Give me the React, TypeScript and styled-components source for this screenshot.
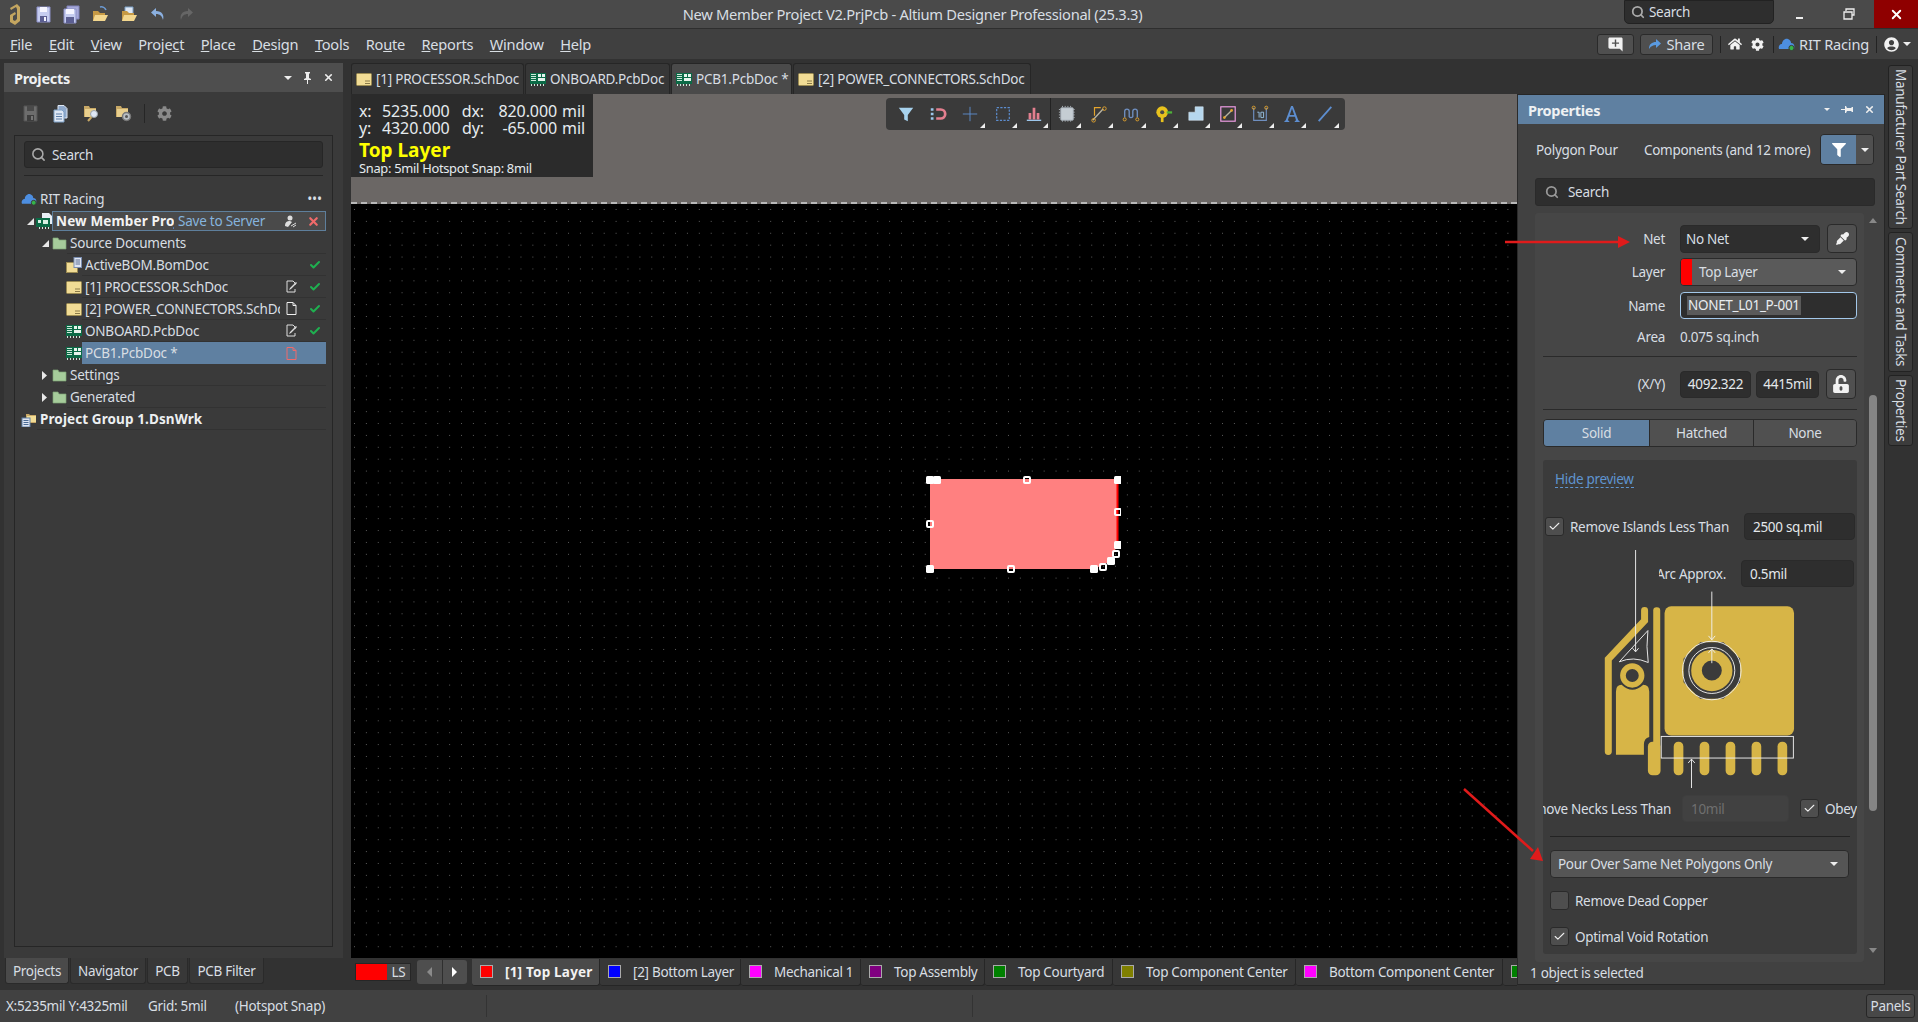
import styled, { createGlobalStyle } from "styled-components";
import { Check, Search, X } from "lucide-react";
import { FaCog, FaEyeDropper, FaFilter, FaHome, FaUnlockAlt, FaUserCircle } from "react-icons/fa";
import { MdAddComment } from "react-icons/md";

const FONT = `"Noto Sans", "Open Sans", sans-serif`;
const TEXT = "#d8dee3";

const Global = createGlobalStyle`
  html, body { margin: 0; padding: 0; background: #323232; overflow: hidden; }
  * { box-sizing: border-box; }
`;

const Page = styled.div`
  width: 1918px;
  height: 1022px;
  display: flex;
  flex-direction: column;
  position: relative;
  overflow: hidden;
  background: #323232;
  color: ${TEXT};
  font-family: ${FONT};
  font-size: 13.5px;
  letter-spacing: -0.3px;
`;

/* ---------- title bar ---------- */
const TitleBar = styled.div`
  height: 29px;
  flex: none;
  display: flex;
  align-items: center;
  position: relative;
  background: #4a4a4a;
  border-bottom: 1px solid #2e2e2e;
`;
const QuickIcons = styled.div`
  display: flex;
  align-items: center;
  gap: 12px;
  padding-left: 8px;
`;
const LogoSlot = styled.span`
  display: flex;
  margin-right: 3px;
`;
const WindowTitle = styled.div`
  flex: 1;
  padding-left: 7px;
  text-align: center;
  font-size: 14.7px;
  letter-spacing: -0.3px;
  white-space: nowrap;
`;
const TitleSearch = styled.div`
  width: 150px;
  height: 24px;
  margin-top: -4px;
  display: flex;
  align-items: center;
  gap: 4px;
  padding-left: 6px;
  background: #2e2e2e;
  border: 1px solid #222;
  border-radius: 0 0 5px 5px;
  font-size: 13.5px;
`;
const WinButton = styled.div<{ $close?: boolean }>`
  width: ${(p) => (p.$close ? "44px" : "50px")};
  height: 28px;
  display: flex;
  align-items: center;
  justify-content: center;
  background: ${(p) => (p.$close ? "#8f0000" : "transparent")};
`;

/* ---------- menu bar ---------- */
const MenuBar = styled.div`
  height: 30px;
  flex: none;
  display: flex;
  align-items: center;
  padding-left: 10px;
  background: #404040;
  font-size: 14.6px;
  letter-spacing: -0.25px;
`;
const MenuItem = styled.span<{ $gap: number }>`
  margin-right: ${(p) => p.$gap}px;
`;
const MenuRight = styled.div`
  margin-left: auto;
  display: flex;
  align-items: center;
  padding-right: 7px;
`;
const HeadButton = styled.div<{ $w: number }>`
  width: ${(p) => p.$w}px;
  height: 21px;
  margin-right: 6px;
  display: flex;
  align-items: center;
  justify-content: center;
  gap: 6px;
  background: #4f4f4f;
  border: 1px solid #2a2a2a;
  border-radius: 3px;
`;
const HeadSep = styled.div<{ $after?: number }>`
  width: 1px;
  height: 17px;
  margin: 0 ${(p) => p.$after ?? 7}px 0 1px;
  background: #232323;
`;
const HeadIcon = styled.span<{ $mr: number }>`
  display: flex;
  margin-right: ${(p) => p.$mr}px;
`;
const HeadName = styled.span`
  margin: 0 6px 0 4px;
  letter-spacing: -0.2px;
  white-space: nowrap;
`;

/* ---------- main area ---------- */
const Main = styled.div`
  flex: 1;
  min-height: 0;
  display: flex;
`;

/* left */
const LeftColumn = styled.div`
  width: 351px;
  flex: none;
  padding: 4px 8px 0 4px;
  display: flex;
  flex-direction: column;
`;
const ProjectsPanel = styled.div`
  height: 895px;
  display: flex;
  flex-direction: column;
  background: #3a3a3a;
`;
const PanelHead = styled.div<{ $active?: boolean }>`
  height: 29px;
  flex: none;
  display: flex;
  align-items: center;
  padding: 0 9px 0 10px;
  background: ${(p) => (p.$active ? "#5f80a1" : "#4e4e4e")};
  color: #eef1f3;
  font-size: 14.5px;
  font-weight: 700;
`;
const PanelTools = styled.div`
  margin-left: auto;
  display: flex;
  align-items: center;
  gap: 11px;
`;
const Triangle = styled.span<{ $size?: number; $color?: string }>`
  display: inline-block;
  width: 0;
  height: 0;
  border-left: ${(p) => p.$size ?? 4}px solid transparent;
  border-right: ${(p) => p.$size ?? 4}px solid transparent;
  border-top: ${(p) => p.$size ?? 4}px solid ${(p) => p.$color ?? "#eee"};
`;
const ProjectTools = styled.div`
  height: 43px;
  flex: none;
  display: flex;
  align-items: center;
  gap: 15px;
  padding-left: 19px;
`;
const ToolDivider = styled.div`
  width: 1px;
  height: 19px;
  margin: 0 -3px;
  background: #262626;
`;
const TreeBox = styled.div`
  margin: 0 10px;
  height: 812px;
  border: 1px solid #262626;
  padding: 5px 9px 0;
`;
const SearchField = styled.div`
  height: 27px;
  display: flex;
  align-items: center;
  gap: 6px;
  padding-left: 6px;
  background: #2e2e2e;
  border: 1px solid #262626;
  border-radius: 3px;
`;
const TreeDivider = styled.div`
  height: 1px;
  margin-top: 7px;
  background: #262626;
`;
const Tree = styled.div`
  margin: 12px -3px 0 -9px;
  letter-spacing: -0.22px;
`;
const TreeRow = styled.div<{ $indent: number }>`
  height: 22px;
  display: flex;
  align-items: center;
  padding-left: ${(p) => p.$indent}px;
`;
const CaretSlot = styled.span`
  width: 12px;
  flex: none;
  display: flex;
  align-items: center;
  justify-content: center;
`;
const RowGlyph = styled.span`
  width: 16px;
  height: 16px;
  flex: none;
  display: flex;
  align-items: center;
  justify-content: center;
`;
const RowBody = styled.div<{ $selected?: boolean; $framed?: boolean; $line?: boolean }>`
  flex: 1;
  min-width: 0;
  height: ${(p) => (p.$framed ? "20px" : "22px")};
  display: flex;
  align-items: center;
  padding-left: 3px;
  background: ${(p) => (p.$selected ? "#5f80a1" : p.$framed ? "#4a4a4a" : "transparent")};
  border: ${(p) => (p.$framed ? "1px solid #5e7f9c" : "none")};
  border-bottom: ${(p) => (p.$framed ? "1px solid #5e7f9c" : p.$line && !p.$selected ? "1px solid #323232" : "none")};
`;
const RowLabel = styled.span<{ $bold?: boolean }>`
  flex: 1;
  min-width: 0;
  overflow: hidden;
  white-space: nowrap;
  font-weight: ${(p) => (p.$bold ? 700 : 400)};
  letter-spacing: ${(p) => (p.$bold ? "0.1px" : "inherit")};
  color: ${(p) => (p.$bold ? "#eceff1" : TEXT)};
`;
const ProjectName = styled.span`
  width: 118px;
  flex: none;
  overflow: hidden;
  white-space: nowrap;
  font-weight: 700;
  letter-spacing: 0.15px;
  color: #f2f2f2;
`;
const SaveLink = styled.span`
  flex: 1;
  padding-left: 4px;
  white-space: nowrap;
  color: #86b4de;
`;
const StatusSlot = styled.span`
  width: 23px;
  flex: none;
  display: flex;
  align-items: center;
  justify-content: center;
`;
const BottomTabs = styled.div`
  display: flex;
  gap: 1px;
  margin-left: 1px;
`;
const PanelTab = styled.div<{ $w: number; $active?: boolean }>`
  width: ${(p) => p.$w}px;
  height: 26px;
  display: flex;
  align-items: center;
  justify-content: center;
  background: ${(p) => (p.$active ? "#4a4a4a" : "#383838")};
  border: 1px solid #2a2a2a;
  border-top: none;
  border-radius: 0 0 3px 3px;
`;

/* center */
const Center = styled.div`
  width: 1166px;
  flex: none;
  padding-top: 4px;
  display: flex;
  flex-direction: column;
`;
const DocTabs = styled.div`
  height: 31px;
  flex: none;
  display: flex;
  gap: 1px;
`;
const DocTab = styled.div<{ $w: number; $active?: boolean }>`
  width: ${(p) => p.$w}px;
  display: flex;
  align-items: center;
  gap: 4px;
  padding-left: 4px;
  white-space: nowrap;
  letter-spacing: -0.22px;
  background: ${(p) => (p.$active ? "#4a4a4a" : "#373737")};
  border: 1px solid #262626;
  border-bottom: none;
  border-radius: 3px 3px 0 0;
`;
const Canvas = styled.div`
  height: 864px;
  flex: none;
  position: relative;
  display: flex;
  flex-direction: column;
  overflow: hidden;
`;
const SheetBand = styled.div`
  height: 110px;
  flex: none;
  background: #6b6765;
  border-bottom: 2px dashed #b9b9b9;
`;
const Board = styled.div`
  flex: 1;
  background-color: #000;
  background-image: radial-gradient(circle at 0.5px 0.5px, #5c5c5c 0.7px, transparent 0.8px);
  background-size: 11.9px 11.9px;
  background-position: 3px 5px;
`;
const Hud = styled.div`
  position: absolute;
  left: 0;
  top: 0;
  width: 242px;
  height: 83px;
  padding: 9px 7px 0 8px;
  background: #2b2b2b;
  color: #e6ebef;
`;
const HudLine = styled.div`
  display: grid;
  grid-template-columns: 23px 66px 36px 73px 28px;
  height: 17px;
  line-height: 17px;
  font-size: 16px;
  letter-spacing: -0.1px;
  white-space: nowrap;
`;
const HudValue = styled.span`
  text-align: right;
`;
const HudLayer = styled.div`
  margin-top: 1px;
  height: 25px;
  line-height: 25px;
  font-size: 19px;
  font-weight: 700;
  color: #ffff00;
  letter-spacing: 0;
`;
const HudSnap = styled.div`
  margin-top: -3px;
  font-size: 12.9px;
  line-height: 16px;
  white-space: nowrap;
`;
const FloatBar = styled.div`
  position: absolute;
  left: 535px;
  top: 4px;
  width: 459px;
  height: 32px;
  display: flex;
  align-items: center;
  padding-left: 4px;
  background: #3a3a3a;
  border-radius: 4px;
`;
const FloatSlot = styled.div<{ $nomark?: boolean; $split?: boolean }>`
  width: 32.2px;
  height: 32px;
  flex: none;
  position: relative;
  display: flex;
  align-items: center;
  justify-content: center;
  border-right: ${(p) => (p.$split ? "1px solid #222" : "none")};
  &::after {
    content: "";
    display: ${(p) => (p.$nomark ? "none" : "block")};
    position: absolute;
    right: 2px;
    bottom: 2px;
    border-left: 5px solid transparent;
    border-bottom: 5px solid #eee;
  }
`;
const PolygonArt = styled.svg`
  position: absolute;
  left: 570px;
  top: 377px;
`;
const LayerBar = styled.div`
  height: 28px;
  flex: none;
  display: flex;
  align-items: center;
  padding-left: 4px;
  overflow: hidden;
`;
const LsBox = styled.div`
  width: 56px;
  height: 18px;
  flex: none;
  display: flex;
  border: 1px solid #262626;
`;
const LsColor = styled.div`
  width: 31px;
  background: #ff0000;
`;
const LsText = styled.div`
  flex: 1;
  display: flex;
  align-items: center;
  justify-content: center;
  background: #4a4a4a;
`;
const LayerNav = styled.div`
  width: 50px;
  height: 24px;
  margin: 0 5px 0 6px;
  flex: none;
  display: flex;
  background: #4e4e4e;
  border-radius: 3px;
`;
const NavHalf = styled.div`
  flex: 1;
  display: flex;
  align-items: center;
  justify-content: center;
  & + & { border-left: 1px solid #2f2f2f; }
`;
const NavArrow = styled.span<{ $dir: "l" | "r"; $dim?: boolean }>`
  width: 0;
  height: 0;
  border-top: 5px solid transparent;
  border-bottom: 5px solid transparent;
  ${(p) => (p.$dir === "l" ? "border-right" : "border-left")}: 5px solid ${(p) => (p.$dim ? "#8a8a8a" : "#fff")};
`;
const LayerTab = styled.div<{ $w: number; $active?: boolean }>`
  width: ${(p) => p.$w}px;
  height: 27px;
  flex: none;
  display: flex;
  align-items: center;
  gap: 12px;
  padding-left: 8px;
  white-space: nowrap;
  background: ${(p) => (p.$active ? "#4a4a4a" : "#373737")};
  border-right: 1px solid #262626;
  border-bottom: 1px solid #262626;
  border-radius: 0 0 3px 3px;
  font-weight: ${(p) => (p.$active ? 700 : 400)};
  letter-spacing: ${(p) => (p.$active ? "0.2px" : "inherit")};
  color: ${(p) => (p.$active ? "#f2f2f2" : TEXT)};
`;
const LayerChip = styled.span<{ $color: string }>`
  width: 13px;
  height: 13px;
  flex: none;
  background: ${(p) => p.$color};
  border: 1px solid #aaa;
`;

/* properties */
const PropsPanel = styled.div`
  width: 368px;
  height: 891px;
  margin-top: 35px;
  flex: none;
  display: flex;
  flex-direction: column;
  background: #414141;
  border: 1px solid #262626;
  border-left: 1px solid #2a2a2a;
`;
const PropsTop = styled.div`
  height: 31px;
  margin-top: 10px;
  flex: none;
  display: flex;
  align-items: center;
  padding: 0 10px 0 18px;
`;
const ObjectKind = styled.span`
  width: 108px;
  flex: none;
`;
const FilterText = styled.span`
  flex: 1;
  white-space: nowrap;
`;
const FilterButton = styled.div`
  width: 54px;
  height: 31px;
  flex: none;
  display: flex;
  border: 1px solid #2a2a2a;
  border-radius: 4px;
  overflow: hidden;
`;
const FilterMain = styled.div`
  width: 35px;
  background: #5f80a1;
  display: flex;
  align-items: center;
  justify-content: center;
  color: #fff;
`;
const FilterCaret = styled.div`
  flex: 1;
  background: #505050;
  display: flex;
  align-items: center;
  justify-content: center;
`;
const PropsSearch = styled.div`
  height: 28px;
  margin: 13px 9px 0 17px;
  flex: none;
  display: flex;
  align-items: center;
  gap: 9px;
  padding-left: 9px;
  background: #2e2e2e;
  border: 1px solid #2a2a2a;
  border-radius: 3px;
`;
const PropsScroll = styled.div`
  flex: 1;
  min-height: 0;
  margin: 7px 6px 0 17px;
  display: flex;
`;
const PropsBody = styled.div`
  width: 329px;
  height: 749px;
  flex: none;
  padding: 11px 7px 0 8px;
  background: #464646;
  border-radius: 3px;
`;
const ScrollTrack = styled.div`
  flex: 1;
  display: flex;
  flex-direction: column;
  align-items: center;
  padding-left: 3px;
`;
const ScrollUp = styled.span`
  margin-top: 5px;
  border-left: 4px solid transparent;
  border-right: 4px solid transparent;
  border-bottom: 5px solid #888;
`;
const ScrollThumb = styled.div`
  width: 8px;
  height: 416px;
  margin-top: 172px;
  background: #858585;
  border-radius: 4px;
`;
const ScrollDown = styled.span`
  margin-top: 137px;
  border-left: 4px solid transparent;
  border-right: 4px solid transparent;
  border-top: 5px solid #888;
`;
const FieldRow = styled.div<{ $h: number; $top?: number }>`
  height: ${(p) => p.$h}px;
  margin-top: ${(p) => p.$top ?? 0}px;
  display: grid;
  grid-template-columns: 122px 177px;
  column-gap: 15px;
  align-items: center;
`;
const FieldLabel = styled.span`
  text-align: right;
  white-space: nowrap;
`;
const FieldGroup = styled.div`
  display: flex;
  align-items: center;
  gap: 7px;
`;
const Dropdown = styled.div<{ $light?: boolean }>`
  flex: 1;
  height: 100%;
  min-height: 28px;
  display: flex;
  align-items: center;
  justify-content: space-between;
  padding: 0 10px 0 5px;
  background: ${(p) => (p.$light ? "#5a5a5a" : "#2e2e2e")};
  border: 1px solid #2a2a2a;
  border-radius: 4px;
  overflow: hidden;
`;
const LayerSwatch = styled.span`
  width: 11px;
  align-self: stretch;
  flex: none;
  margin: 0 7px 0 -5px;
  background: #ff0000;
`;
const DropText = styled.span`
  flex: 1;
  white-space: nowrap;
`;
const IconButton = styled.div<{ $h?: number }>`
  width: 30px;
  height: ${(p) => p.$h ?? 29}px;
  flex: none;
  display: flex;
  align-items: center;
  justify-content: center;
  background: #505050;
  border: 1px solid #2a2a2a;
  border-radius: 4px;
  color: #f2f2f2;
`;
const NameInput = styled.div`
  height: 27px;
  display: flex;
  align-items: center;
  padding-left: 6px;
  background: #2e2e2e;
  border: 1px solid #a3c8ea;
  border-radius: 4px;
`;
const Selected = styled.span`
  padding: 0 1px;
  background: #5a5a5a;
  line-height: 19px;
  color: #e8ecef;
  white-space: nowrap;
`;
const Rule = styled.div<{ $top: number; $dark?: boolean; $inset?: number }>`
  height: 1px;
  margin: ${(p) => p.$top}px ${(p) => p.$inset ?? 0}px 0;
  background: ${(p) => (p.$dark ? "#232323" : "#2a2a2a")};
`;
const TextInput = styled.div<{ $w: number; $disabled?: boolean; $center?: boolean }>`
  width: ${(p) => p.$w}px;
  height: 27px;
  flex: none;
  display: flex;
  align-items: center;
  justify-content: ${(p) => (p.$center ? "center" : "flex-start")};
  padding-left: ${(p) => (p.$center ? 0 : 8)}px;
  background: ${(p) => (p.$disabled ? "#414141" : "#2e2e2e")};
  border: 1px solid ${(p) => (p.$disabled ? "#3e3e3e" : "#2a2a2a")};
  border-radius: 4px;
  color: ${(p) => (p.$disabled ? "#6f6f6f" : "#e4e8eb")};
`;
const CoordGroup = styled.div`
  display: flex;
  align-items: center;
  gap: 5px;
`;
const Segments = styled.div`
  height: 28px;
  margin-top: 9px;
  display: grid;
  grid-template-columns: 105px 104px 1fr;
  border: 1px solid #2a2a2a;
  border-radius: 4px;
  overflow: hidden;
`;
const Segment = styled.div<{ $on?: boolean }>`
  display: flex;
  align-items: center;
  justify-content: center;
  background: ${(p) => (p.$on ? "#5f80a1" : "#505050")};
  & + & { border-left: 1px solid #2a2a2a; }
`;
const Preview = styled.div`
  height: 494px;
  margin-top: 13px;
  padding-top: 10px;
  background: #3b3b3b;
  border-radius: 3px;
  overflow: hidden;
`;
const HideLink = styled.span`
  display: inline-block;
  margin-left: 12px;
  line-height: 16px;
  color: #5f94cf;
  border-bottom: 1px dashed #5f94cf;
`;
const PreviewRow = styled.div<{ $top: number; $end?: boolean; $pad?: number }>`
  height: 27px;
  margin-top: ${(p) => p.$top}px;
  display: flex;
  align-items: center;
  justify-content: ${(p) => (p.$end ? "flex-end" : "flex-start")};
  padding: 0 3px 0 ${(p) => p.$pad ?? 0}px;
`;
const Box = styled.div`
  width: 19px;
  height: 19px;
  flex: none;
  display: flex;
  align-items: center;
  justify-content: center;
  background: #4e4e4e;
  border: 1px solid #2a2a2a;
  border-radius: 3px;
  color: #eee;
`;
const BoxLabel = styled.span<{ $w?: number }>`
  margin-left: 6px;
  white-space: nowrap;
  ${(p) => (p.$w ? `width: ${p.$w}px; overflow: hidden; flex: none;` : "")}
`;
const ClipLabel = styled.span<{ $w: number; $gap: number }>`
  width: ${(p) => p.$w}px;
  margin-right: ${(p) => p.$gap}px;
  flex: none;
  display: flex;
  justify-content: flex-end;
  overflow: hidden;
  white-space: nowrap;
`;
const NeckBox = styled.span`
  display: flex;
  margin-left: 11px;
`;
const PreviewArt = styled.svg`
  display: block;
  margin: -37px 0 0 60px;
`;
const PourSelect = styled.div`
  height: 28px;
  margin: 13px 8px 0 7px;
  display: flex;
  align-items: center;
  justify-content: space-between;
  padding: 0 10px 0 7px;
  background: #555;
  border: 1px solid #2a2a2a;
  border-radius: 4px;
  white-space: nowrap;
`;
const CheckRow = styled.div<{ $top: number }>`
  height: 19px;
  margin: ${(p) => p.$top}px 0 0 7px;
  display: flex;
  align-items: center;
`;
const PropsStatus = styled.div`
  height: 22px;
  flex: none;
  padding-left: 12px;
  display: flex;
  align-items: center;
`;

/* right tabs */
const SideTabs = styled.div`
  flex: 1;
  padding: 6px 0 0 3px;
  display: flex;
  flex-direction: column;
  gap: 3px;
`;
const SideTab = styled.div<{ $h: number }>`
  width: 25px;
  height: ${(p) => p.$h}px;
  display: flex;
  align-items: center;
  justify-content: center;
  writing-mode: vertical-rl;
  white-space: nowrap;
  background: #3c3c3c;
  border: 1px solid #222;
  border-radius: 3px;
`;

/* status bar */
const StatusBar = styled.div`
  height: 32px;
  flex: none;
  display: flex;
  align-items: center;
  padding-left: 6px;
  background: #414141;
`;
const StatusText = styled.span<{ $w: number }>`
  width: ${(p) => p.$w}px;
  flex: none;
  white-space: nowrap;
`;
const StatusSep = styled.div<{ $w: number }>`
  width: ${(p) => p.$w}px;
  height: 22px;
  flex: none;
  border-right: 1px solid #333;
`;
const PanelsButton = styled.div`
  width: 49px;
  height: 24px;
  margin: 0 3px 0 auto;
  display: flex;
  align-items: center;
  justify-content: center;
  background: #484848;
  border: 1px solid #262626;
  border-radius: 3px;
`;
const Annotations = styled.svg`
  position: absolute;
  left: 0;
  top: 0;
  pointer-events: none;
`;

/* ---------- drawn icons ---------- */
const SaveIcon = ({ dim }: { dim?: boolean }) => (
  <svg width="15" height="17" viewBox="0 0 15 17">
    <path d="M1 1h13v15H1z" fill={dim ? "#6d6d6d" : "#c6cdf0"} stroke={dim ? "#555" : "#8c90c8"} />
    <path d="M4 1h7v5H4z" fill={dim ? "#4a4a4a" : "#f5f5ff"} />
    <path d="M4 10h7v6H4z" fill={dim ? "#3e3e3e" : "#5c5f92"} />
    <path d="M8 11h2v4H8z" fill={dim ? "#777" : "#f5f5ff"} />
  </svg>
);
const SaveAllIcon = () => (
  <svg width="17" height="19" viewBox="0 0 17 19">
    <path d="M4 1h12v13H4z" fill="#a6a9d8" stroke="#8082bb" />
    <path d="M1 4h12v14H1z" fill="#c6cdf0" stroke="#8c90c8" />
    <path d="M3 4h8v5H3z" fill="#f5f5ff" />
    <path d="M3 12h8v6H3z" fill="#5c5f92" />
  </svg>
);
const OpenIcon = ({ paper }: { paper?: boolean }) => (
  <svg width="17" height="17" viewBox="0 0 17 17">
    {paper && <path d="M4 1h8v8H4z" fill="#dfe8f5" stroke="#7da0c6" />}
    {!paper && <path d="M8 1a5 5 0 0 1 6 3" fill="none" stroke="#6c9bd4" strokeWidth="1.5" />}
    <path d="M1 5h5l2 2h5v8H1z" fill="#c79a45" />
    <path d="M3 9h13l-3 6H1z" fill="#f3d78f" />
  </svg>
);
const CopyDocs = () => (
  <svg width="15" height="18" viewBox="0 0 15 18">
    <path d="M5 .5h6l3 3V13H5z" fill="#8fa9cc" stroke="#dfe8f5" />
    <path d="M1 5h8l2 2v10H1z" fill="#dfe8f5" stroke="#7da0c6" />
    <path d="M3 9h6M3 11.500h6M3 14h6" stroke="#5c7ea8" />
  </svg>
);
const FolderSearch = () => (
  <svg width="17" height="17" viewBox="0 0 17 17">
    <path d="M1 1h5l1 2h6v9H1z" fill="#c7a866" />
    <path d="M2 4h11v8H2z" fill="#e9cf8d" />
    <circle cx="11" cy="9" r="3.500" fill="#dfe8f5" stroke="#9aa3aa" />
    <path d="M8.500 12 5 16" stroke="#c7a866" strokeWidth="2" />
  </svg>
);
const FolderGear = () => (
  <svg width="17" height="17" viewBox="0 0 17 17">
    <path d="M1 1h5l1 2h6v9H1z" fill="#c7a866" />
    <path d="M2 4h11v8H2z" fill="#e9cf8d" />
    <circle cx="11.500" cy="11.500" r="4" fill="#b9bfc5" stroke="#777" strokeWidth="1.500" />
    <circle cx="11.500" cy="11.500" r="1.500" fill="#555" />
  </svg>
);
const UndoIcon = ({ redo }: { redo?: boolean }) => (
  <svg width="16" height="14" viewBox="0 0 16 14">
    <g transform={redo ? "translate(16 0) scale(-1 1)" : undefined}>
      <path d="M6 1 1 5.5 6 10V7c4 0 6 2 7 6 1.5-5-1-9-7-9z" fill={redo ? "#666" : "#8bb0e0"} />
    </g>
  </svg>
);
const AltiumLogo = () => (
  <svg width="13" height="23" viewBox="0 0 13 23">
    <path d="M2 5 9 1l3 3v14l-5 4-5-3v-7l5-3 1 2-3 2v4l2 1 2-2V6L8 4 3 7z" fill="#c4a660" />
  </svg>
);
const CloudIcon = () => (
  <svg width="17" height="14" viewBox="0 0 17 14">
    <path d="M1 12c-1-3 1-5 3-5 0-3 3-6 6-5 2 1 3 2 3 4 3 0 4 3 3 6z" fill="#4d8ee0" />
    <circle cx="13.5" cy="11" r="2.6" fill="#35b34a" stroke="#3a3a3a" />
  </svg>
);
const SchIcon = () => (
  <svg width="16" height="13" viewBox="0 0 16 13">
    <rect x="0.5" y="0.5" width="15" height="12" rx="1" fill="#f1dc95" stroke="#9a8a52" />
    <path d="M9 8h5M9 10.500h5" stroke="#8a7a48" />
  </svg>
);
const PcbIcon = () => (
  <svg width="16" height="13" viewBox="0 0 16 13">
    <rect width="16" height="11" fill="#0b6a46" />
    <path d="M1 1h5v1H1zM1 3h5v1H1zM1 5h5v1H1zM1 7h5v1H1z" fill="#cfe8da" />
    <path d="M8 1h3v3H8zM12 1h3v3h-3zM8 5h7v3H8z" fill="#e6f3ec" />
    <path d="M1 11h1v2H1zM4 11h1v2H4zM7 11h1v2H7zM10 11h1v2h-1zM13 11h1v2h-1z" fill="#cfe8da" />
  </svg>
);
const ProjectIcon = () => (
  <svg width="16" height="16" viewBox="0 0 16 16">
    <path d="M6 0h7l3 3v8H6z" fill="#e8eef5" />
    <rect y="5" width="14" height="9" fill="#0b6a46" />
    <path d="M2 7h3v3H2zM7 7h5v4H7zM3 14h1v2H3zM6 14h1v2H6zM9 14h1v2H9zM12 14h1v2h-1z" fill="#d8efe3" />
  </svg>
);
const FolderIcon = () => (
  <svg width="15" height="14" viewBox="0 0 15 14">
    <path d="M1 2h5l1 2h7v9H1z" fill="#a6cc9b" stroke="#7fa576" strokeWidth="0.7" />
  </svg>
);
const BomIcon = () => (
  <svg width="16" height="16" viewBox="0 0 16 16">
    <rect x="0.500" y="5.500" width="11" height="10" fill="#f1dc95" stroke="#9a8a52" />
    <rect x="8" y="0.500" width="7.500" height="10" fill="#dfe6f3" stroke="#7a8db0" />
    <path d="M9.500 3h4.500M9.500 5h4.500M9.500 7h4.500" stroke="#5c6f92" />
  </svg>
);
const GroupIcon = () => (
  <svg width="16" height="15" viewBox="0 0 16 15">
    <path d="M5 2h3l1 1h6v8H5z" fill="#c8a867" />
    <path d="M6 4h9v6H6z" fill="#f1dc95" />
    <rect x="1" y="6" width="8" height="9" fill="#dfe6f3" stroke="#5f7ea5" />
    <path d="M2.500 8.500h5M2.500 10.500h5M2.500 12.500h5" stroke="#4b6b94" />
  </svg>
);
const EditedDoc = () => (
  <svg width="12" height="13" viewBox="0 0 12 13">
    <path d="M1 1h6l2 2v2M9 9v3H1V1" fill="none" stroke="#ddd" />
    <path d="M4 8l6-6 1 1-6 6-2 1z" fill="#ddd" />
  </svg>
);
const PlainDoc = ({ color = "#eee" }: { color?: string }) => (
  <svg width="11" height="13" viewBox="0 0 11 13">
    <path d="M1 .5h6l3 3v9H1z M7 .5v3h3" fill="none" stroke={color} />
  </svg>
);
const Collab = () => (
  <svg width="13" height="13" viewBox="0 0 13 13">
    <circle cx="6" cy="3" r="2.500" fill="#ddd" />
    <path d="M1 11c0-4 2-5 5-5l2 1-4 5z" fill="#ddd" />
    <path d="M7 11l5-3M9 12l3-2" stroke="#ddd" />
  </svg>
);
const OkMark = () => <Check size={12} strokeWidth={4} color="#1fb050" />;
const Expanded = () => (
  <svg width="7" height="7" viewBox="0 0 7 7"><path d="M7 0v7H0z" fill="#e8e8e8" /></svg>
);
const Collapsed = () => (
  <svg width="6" height="9" viewBox="0 0 6 9"><path d="M0 0l5 4.500L0 9z" fill="#e8e8e8" /></svg>
);
const TinyPin = () => (
  <svg width="9" height="12" viewBox="0 0 9 12"><path d="M2 0h5v1L6 2v4l2 1v1H5v4H4V8H1V7l2-1V2L2 1z" fill="#eee" /></svg>
);
const TinyPinH = () => (
  <svg width="12" height="9" viewBox="0 0 12 9"><path d="M12 2v5h-1l-1-1H6L5 8H4V5H0V4h4V1h1l1 2h4l1-1z" fill="#eee" /></svg>
);

const ToolIcons = [
  <path key="f" d="M2 3h16l-6 8v7l-4-2v-5z" fill="#a7d2ee" />,
  <g key="m" fill="none" strokeWidth="3"><path d="M8 5h5a5 5 0 0 1 0 10H8" stroke="#e47f8f" /><path d="M2 5h3M2 10h3M2 15h3" stroke="#9cc7ec" /></g>,
  <path key="c" d="M10 2v16M2 10h16" stroke="#5d8ed0" strokeWidth="1" />,
  <rect key="r" x="3" y="3" width="14" height="14" fill="none" stroke="#5d8ed0" strokeWidth="1.300" strokeDasharray="2.500 1.500" />,
  <g key="a"><path d="M2 17h16" stroke="#9cc7ec" strokeWidth="1.500" /><path d="M4 9h3v7H4zM8.500 3h3v13h-3zM13 9h3v7h-3z" fill="#e47f8f" /></g>,
  <g key="ch"><rect x="3" y="3" width="14" height="14" rx="1" fill="#c5cdd3" stroke="#9aa3aa" /><path d="M5 1v18M8 1v18M11 1v18M14 1v18M1 5h18M1 8h18M1 11h18M1 14h18" stroke="#aeb6bc" strokeDasharray="1.500 14.500" /></g>,
  <g key="t" fill="none"><path d="M3 17 14 5l1 0" stroke="#b8b4a2" strokeWidth="1.500" /><path d="M5 12V3h7" stroke="#e5a52d" strokeWidth="1.300" /><circle cx="4" cy="17" r="2" stroke="#e5a52d" /><circle cx="16" cy="4" r="2" stroke="#e5a52d" /></g>,
  <g key="w" fill="none"><path d="M3 14V7a2.500 2.500 0 0 1 5 0v6a2.500 2.500 0 0 0 4 0V7a2.500 2.500 0 0 1 5 0v7" stroke="#6f8fc0" strokeWidth="1.500" /><circle cx="3" cy="16" r="1.700" stroke="#e5a52d" /><circle cx="17" cy="16" r="1.700" stroke="#e5a52d" /></g>,
  <g key="v"><circle cx="8" cy="8" r="6.500" fill="#e8c21d" /><circle cx="8" cy="8" r="2.300" fill="#4a4a4a" /><path d="M13 7h6v2.500h-6z" fill="#4fb33a" /><path d="M6.500 13h3v6h-3z" fill="#e8c21d" /></g>,
  <path key="p" d="M2 8h7V2h9v15H2z" fill="#b6d7ee" stroke="#dbeaf5" strokeWidth="0.600" />,
  <g key="rk"><rect x="2" y="2" width="16" height="16" fill="none" stroke="#f09ee6" strokeWidth="1.300" /><path d="M6 14l8-8" stroke="#b8b4a2" strokeWidth="1.500" /><circle cx="6" cy="14" r="1.500" fill="#e5a52d" /><circle cx="14" cy="6" r="1.500" fill="#e5a52d" /></g>,
  <g key="d" fill="none"><path d="M3 3v14h14V3" stroke="#6f8fc0" strokeWidth="1.300" /><circle cx="3" cy="3" r="1.700" stroke="#e5a52d" /><circle cx="17" cy="3" r="1.700" stroke="#e5a52d" /><path d="M7 8h2v6M11 8h3v6h-3z" stroke="#9cc7ec" /></g>,
  <path key="A" d="M9 1h2l6 16 1.500 1v1H13v-1l1.500-1-1.200-4H6.700l-1.300 4L7 18v1H1.500v-1L3 17zM7.500 11h5L10 4z" fill="#5d8ed0" />,
  <path key="l" d="M3 18 17 2" stroke="#5d8ed0" strokeWidth="2" />,
];

/* ---------- data ---------- */
const menus: [string, string, string, number][] = [
  ["", "F", "ile", 16.6], ["", "E", "dit", 16.6], ["", "V", "iew", 16.6], ["Proje", "c", "t", 16.6],
  ["", "P", "lace", 16.6], ["", "D", "esign", 16.6], ["", "T", "ools", 16.6], ["Ro", "u", "te", 16.6],
  ["", "R", "eports", 16.6], ["", "W", "indow", 16.6], ["", "H", "elp", 0],
];
const docs = [
  { name: "[1] PROCESSOR.SchDoc", w: 173, sch: true },
  { name: "ONBOARD.PcbDoc", w: 145, sch: false },
  { name: "PCB1.PcbDoc *", w: 121, sch: false, active: true },
  { name: "[2] POWER_CONNECTORS.SchDoc", w: 238, sch: true },
];
const layers = [
  { name: "[1] Top Layer", color: "#ff0000", w: 128, active: true },
  { name: "[2] Bottom Layer", color: "#0000ff", w: 141 },
  { name: "Mechanical 1", color: "#ff00ff", w: 120 },
  { name: "Top Assembly", color: "#800080", w: 124 },
  { name: "Top Courtyard", color: "#008000", w: 128 },
  { name: "Top Component Center", color: "#808000", w: 183 },
  { name: "Bottom Component Center", color: "#ff00ff", w: 207 },
  { name: "", color: "#008000", w: 40 },
];
const holes = [[1027, 480], [1118, 512], [930, 524], [1011, 569], [1103, 567], [1116, 554]];
const solids = [[930, 480], [937, 480], [1118, 480], [1118, 545], [1111, 561], [1094, 569], [930, 569]];

export default function App() {
  return (
    <Page>
      <Global />
      <TitleBar>
        <QuickIcons>
          <LogoSlot><AltiumLogo /></LogoSlot>
          <SaveIcon />
          <SaveAllIcon />
          <OpenIcon />
          <OpenIcon paper />
          <UndoIcon />
          <UndoIcon redo />
        </QuickIcons>
        <WindowTitle>New Member Project V2.PrjPcb - Altium Designer Professional (25.3.3)</WindowTitle>
        <TitleSearch><Search size={14} strokeWidth={3} color="#aaa" />Search</TitleSearch>
        <WinButton><svg width="10" height="10"><path d="M2 9h7" stroke="#eee" strokeWidth="2" /></svg></WinButton>
        <WinButton><svg width="12" height="12" viewBox="0 0 12 12"><path d="M3 3V1h8v6H9M1 4h8v7H1z" fill="none" stroke="#eee" strokeWidth="1.300" /></svg></WinButton>
        <WinButton $close><X size={15} strokeWidth={3} color="#fff" /></WinButton>
      </TitleBar>

      <MenuBar>
        {menus.map(([a, b, c, gap]) => (
          <MenuItem key={a + b + c} $gap={gap}>{a}<u>{b}</u>{c}</MenuItem>
        ))}
        <MenuRight>
          <HeadButton $w={37}><MdAddComment size={17} color="#f2f2f2" /></HeadButton>
          <HeadButton $w={73}>
            <svg width="12" height="10" viewBox="0 0 12 10"><path d="M7 0l5 4.500L7 9V6C4 6 2 7 0 10c0-5 3-7 7-7z" fill="#5a9ae0" /></svg>
            Share
          </HeadButton>
          <HeadSep />
          <HeadIcon $mr={9}><FaHome size={14} color="#f2f2f2" /></HeadIcon>
          <HeadIcon $mr={8}><FaCog size={13} color="#f2f2f2" /></HeadIcon>
          <HeadSep $after={4} />
          <CloudIcon />
          <HeadName>RIT Racing</HeadName>
          <HeadSep />
          <HeadIcon $mr={4}><FaUserCircle size={15} color="#f2f2f2" /></HeadIcon>
          <Triangle />
        </MenuRight>
      </MenuBar>

      <Main>
        <LeftColumn>
          <ProjectsPanel>
            <PanelHead>
              Projects
              <PanelTools><Triangle /><TinyPin /><X size={11} strokeWidth={3.500} color="#eee" /></PanelTools>
            </PanelHead>
            <ProjectTools>
              <SaveIcon dim />
              <CopyDocs />
              <FolderSearch />
              <FolderGear />
              <ToolDivider />
              <FaCog size={15} color="#8a8a8a" />
            </ProjectTools>
            <TreeBox>
              <SearchField><Search size={15} strokeWidth={2.500} color="#aaa" />Search</SearchField>
              <TreeDivider />
              <Tree>
                <TreeRow $indent={6}>
                  <RowGlyph><CloudIcon /></RowGlyph>
                  <RowBody><RowLabel>RIT Racing</RowLabel><StatusSlot>•••</StatusSlot></RowBody>
                </TreeRow>
                <TreeRow $indent={9}>
                  <CaretSlot><Expanded /></CaretSlot>
                  <RowGlyph><ProjectIcon /></RowGlyph>
                  <RowBody $framed>
                    <ProjectName>New Member Project</ProjectName>
                    <SaveLink>Save to Server</SaveLink>
                    <StatusSlot><Collab /></StatusSlot>
                    <StatusSlot><X size={13} strokeWidth={4} color="#f06a6a" /></StatusSlot>
                  </RowBody>
                </TreeRow>
                <TreeRow $indent={24}>
                  <CaretSlot><Expanded /></CaretSlot>
                  <RowGlyph><FolderIcon /></RowGlyph>
                  <RowBody $line><RowLabel>Source Documents</RowLabel></RowBody>
                </TreeRow>
                <TreeRow $indent={51}>
                  <RowGlyph><BomIcon /></RowGlyph>
                  <RowBody $line><RowLabel>ActiveBOM.BomDoc</RowLabel><StatusSlot /><StatusSlot><OkMark /></StatusSlot></RowBody>
                </TreeRow>
                <TreeRow $indent={51}>
                  <RowGlyph><SchIcon /></RowGlyph>
                  <RowBody $line><RowLabel>[1] PROCESSOR.SchDoc</RowLabel><StatusSlot><EditedDoc /></StatusSlot><StatusSlot><OkMark /></StatusSlot></RowBody>
                </TreeRow>
                <TreeRow $indent={51}>
                  <RowGlyph><SchIcon /></RowGlyph>
                  <RowBody $line><RowLabel>[2] POWER_CONNECTORS.SchDoc</RowLabel><StatusSlot><PlainDoc /></StatusSlot><StatusSlot><OkMark /></StatusSlot></RowBody>
                </TreeRow>
                <TreeRow $indent={51}>
                  <RowGlyph><PcbIcon /></RowGlyph>
                  <RowBody $line><RowLabel>ONBOARD.PcbDoc</RowLabel><StatusSlot><EditedDoc /></StatusSlot><StatusSlot><OkMark /></StatusSlot></RowBody>
                </TreeRow>
                <TreeRow $indent={51}>
                  <RowGlyph><PcbIcon /></RowGlyph>
                  <RowBody $selected><RowLabel>PCB1.PcbDoc *</RowLabel><StatusSlot><PlainDoc color="#ef6b6b" /></StatusSlot><StatusSlot /></RowBody>
                </TreeRow>
                <TreeRow $indent={24}>
                  <CaretSlot><Collapsed /></CaretSlot>
                  <RowGlyph><FolderIcon /></RowGlyph>
                  <RowBody $line><RowLabel>Settings</RowLabel></RowBody>
                </TreeRow>
                <TreeRow $indent={24}>
                  <CaretSlot><Collapsed /></CaretSlot>
                  <RowGlyph><FolderIcon /></RowGlyph>
                  <RowBody $line><RowLabel>Generated</RowLabel></RowBody>
                </TreeRow>
                <TreeRow $indent={6}>
                  <RowGlyph><GroupIcon /></RowGlyph>
                  <RowBody $line><RowLabel $bold>Project Group 1.DsnWrk</RowLabel></RowBody>
                </TreeRow>
              </Tree>
            </TreeBox>
          </ProjectsPanel>
          <BottomTabs>
            <PanelTab $w={64} $active>Projects</PanelTab>
            <PanelTab $w={76}>Navigator</PanelTab>
            <PanelTab $w={41}>PCB</PanelTab>
            <PanelTab $w={75}>PCB Filter</PanelTab>
          </BottomTabs>
        </LeftColumn>

        <Center>
          <DocTabs>
            {docs.map((d) => (
              <DocTab key={d.name} $w={d.w} $active={d.active}>
                {d.sch ? <SchIcon /> : <PcbIcon />}
                {d.name}
              </DocTab>
            ))}
          </DocTabs>
          <Canvas>
            <SheetBand />
            <Board />
            <Hud>
              <HudLine><span>x:</span><HudValue>5235.000</HudValue><HudValue>dx:</HudValue><HudValue>820.000</HudValue><HudValue>mil</HudValue></HudLine>
              <HudLine><span>y:</span><HudValue>4320.000</HudValue><HudValue>dy:</HudValue><HudValue>-65.000</HudValue><HudValue>mil</HudValue></HudLine>
              <HudLayer>Top Layer</HudLayer>
              <HudSnap>Snap: 5mil Hotspot Snap: 8mil</HudSnap>
            </Hud>
            <FloatBar>
              {ToolIcons.map((icon, i) => (
                <FloatSlot key={i} $nomark={i < 2} $split={i === 4}>
                  <svg width="18" height="18" viewBox="0 0 20 20">{icon}</svg>
                </FloatSlot>
              ))}
            </FloatBar>
            <PolygonArt width="200" height="104" viewBox="921 471 200 104">
              <path d="M930 479H1117V545L1111 561L1094 569H930Z" fill="#ff8080" />
              <path d="M1117.500 479V547" stroke="#ff0000" strokeWidth="2" />
              {solids.map(([x, y]) => (
                <rect key={`${x}-${y}`} x={x - 4} y={y - 4} width="8" height="8" rx="1.500" fill="#fff" />
              ))}
              {holes.map(([x, y]) => (
                <rect key={`${x}-${y}`} x={x - 3} y={y - 3} width="6" height="6" rx="1" fill="none" stroke="#fff" strokeWidth="2" />
              ))}
            </PolygonArt>
          </Canvas>
          <LayerBar>
            <LsBox><LsColor /><LsText>LS</LsText></LsBox>
            <LayerNav>
              <NavHalf><NavArrow $dir="l" $dim /></NavHalf>
              <NavHalf><NavArrow $dir="r" /></NavHalf>
            </LayerNav>
            {layers.map((l) => (
              <LayerTab key={l.name + l.color} $w={l.w} $active={l.active}>
                <LayerChip $color={l.color} />
                {l.name}
              </LayerTab>
            ))}
          </LayerBar>
        </Center>

        <PropsPanel>
          <PanelHead $active>
            Properties
            <PanelTools><Triangle $size={3.500} /><TinyPinH /><X size={11} strokeWidth={3.500} color="#eee" /></PanelTools>
          </PanelHead>
          <PropsTop>
            <ObjectKind>Polygon Pour</ObjectKind>
            <FilterText>Components (and 12 more)</FilterText>
            <FilterButton>
              <FilterMain><FaFilter size={14} /></FilterMain>
              <FilterCaret><Triangle $size={4.500} /></FilterCaret>
            </FilterButton>
          </PropsTop>
          <PropsSearch><Search size={14} strokeWidth={3} color="#999" />Search</PropsSearch>
          <PropsScroll>
            <PropsBody>
              <FieldRow $h={29}>
                <FieldLabel>Net</FieldLabel>
                <FieldGroup>
                  <Dropdown><DropText>No Net</DropText><Triangle $size={4.500} /></Dropdown>
                  <IconButton><FaEyeDropper size={13} /></IconButton>
                </FieldGroup>
              </FieldRow>
              <FieldRow $h={28} $top={5}>
                <FieldLabel>Layer</FieldLabel>
                <Dropdown $light><LayerSwatch /><DropText>Top Layer</DropText><Triangle $size={4.500} /></Dropdown>
              </FieldRow>
              <FieldRow $h={27} $top={6}>
                <FieldLabel>Name</FieldLabel>
                <NameInput><Selected>NONET_L01_P-001</Selected></NameInput>
              </FieldRow>
              <FieldRow $h={22} $top={7}>
                <FieldLabel>Area</FieldLabel>
                <span>0.075 sq.inch</span>
              </FieldRow>
              <Rule $top={8} />
              <FieldRow $h={30} $top={12}>
                <FieldLabel>(X/Y)</FieldLabel>
                <FieldGroup>
                  <CoordGroup>
                    <TextInput $w={71} $center>4092.322</TextInput>
                    <TextInput $w={63} $center>4415mil</TextInput>
                  </CoordGroup>
                  <IconButton $h={30}><FaUnlockAlt size={18} /></IconButton>
                </FieldGroup>
              </FieldRow>
              <Rule $top={10} />
              <Segments>
                <Segment $on>Solid</Segment>
                <Segment>Hatched</Segment>
                <Segment>None</Segment>
              </Segments>
              <Preview>
                <HideLink>Hide preview</HideLink>
                <PreviewRow $top={25} $pad={2}>
                  <Box><Check size={13} strokeWidth={2} /></Box>
                  <BoxLabel $w={174}>Remove Islands Less Than</BoxLabel>
                  <TextInput $w={111}>2500 sq.mil</TextInput>
                </PreviewRow>
                <PreviewRow $top={20} $end>
                  <ClipLabel $w={67} $gap={15}>Arc Approx.</ClipLabel>
                  <TextInput $w={113}>0.5mil</TextInput>
                </PreviewRow>
                <PreviewArt width="192" height="238" viewBox="250 150 575 715">
                  <g fill="#d7b547">
                    <rect x="434" y="319" width="389" height="388" rx="20" />
                    <rect x="400" y="322" width="21" height="420" rx="10" />
                    <rect x="384" y="726" width="38" height="101" rx="14" />
                    <path d="M288 575Q288 555 305 555Q337 585 370 555Q388 555 388 575V712Q372 716 372 735V765H288Z" />
                    {[476, 554, 632, 710, 788].map((x) => (
                      <rect key={x} x={x - 14.500} y="726" width="29" height="101" rx="14" />
                    ))}
                  </g>
                  <path d="M374 332V362L265 478V755" fill="none" stroke="#d7b547" strokeWidth="21" strokeLinecap="round" />
                  <circle cx="337" cy="527" r="28" fill="none" stroke="#d7b547" strokeWidth="17" />
                  <path d="M541 427H611L661 477V547L611 597H541L491 547V477Z" fill="#3b3b3b" />
                  <circle cx="576" cy="512" r="46" fill="none" stroke="#d7b547" strokeWidth="32" />
                  <g fill="none" stroke="#f0f0f0" strokeWidth="2.800">
                    <circle cx="576" cy="512" r="88" />
                    <circle cx="576" cy="512" r="69" />
                    <path d="M384 392L298 486Q340 468 385 488Q378 440 384 392Z" strokeLinejoin="round" />
                    <rect x="424" y="710" width="397" height="65" />
                    <path d="M347 150V455M338 445L347 456L356 445" />
                    <path d="M576 275V420M566 408L576 420L586 408" />
                    <path d="M576 490V447M566 459L576 447L586 459" />
                    <path d="M515 865V778M505 790L515 778L525 790" />
                  </g>
                </PreviewArt>
                <PreviewRow $top={7}>
                  <ClipLabel $w={128} $gap={11}>Remove Necks Less Than</ClipLabel>
                  <TextInput $w={107} $disabled>10mil</TextInput>
                  <NeckBox><Box><Check size={13} strokeWidth={2} /></Box></NeckBox>
                  <BoxLabel>Obey</BoxLabel>
                </PreviewRow>
                <Rule $top={14} $dark $inset={7} />
                <PourSelect>Pour Over Same Net Polygons Only<Triangle $size={4.500} /></PourSelect>
                <CheckRow $top={13}><Box /><BoxLabel>Remove Dead Copper</BoxLabel></CheckRow>
                <CheckRow $top={17}><Box><Check size={13} strokeWidth={2} /></Box><BoxLabel>Optimal Void Rotation</BoxLabel></CheckRow>
              </Preview>
            </PropsBody>
            <ScrollTrack>
              <ScrollUp />
              <ScrollThumb />
              <ScrollDown />
            </ScrollTrack>
          </PropsScroll>
          <PropsStatus>1 object is selected</PropsStatus>
        </PropsPanel>

        <SideTabs>
          <SideTab $h={164}>Manufacturer Part Search</SideTab>
          <SideTab $h={140}>Comments and Tasks</SideTab>
          <SideTab $h={71}>Properties</SideTab>
        </SideTabs>
      </Main>

      <StatusBar>
        <StatusText $w={142}>X:5235mil Y:4325mil</StatusText>
        <StatusText $w={87}>Grid: 5mil</StatusText>
        <StatusText $w={100}>(Hotspot Snap)</StatusText>
        <StatusSep $w={152} />
        <StatusSep $w={486} />
        <PanelsButton>Panels</PanelsButton>
      </StatusBar>

      <Annotations width="1918" height="1022" viewBox="0 0 1918 1022">
        <path d="M1505 242H1620" stroke="#e01b1b" strokeWidth="2.500" />
        <path d="M1618 236L1630 242L1618 248Z" fill="#e01b1b" />
        <path d="M1464 789L1533 851" stroke="#e01b1b" strokeWidth="2.500" />
        <path d="M1543 861L1530 859L1538 847Z" fill="#e01b1b" />
      </Annotations>
    </Page>
  );
}
